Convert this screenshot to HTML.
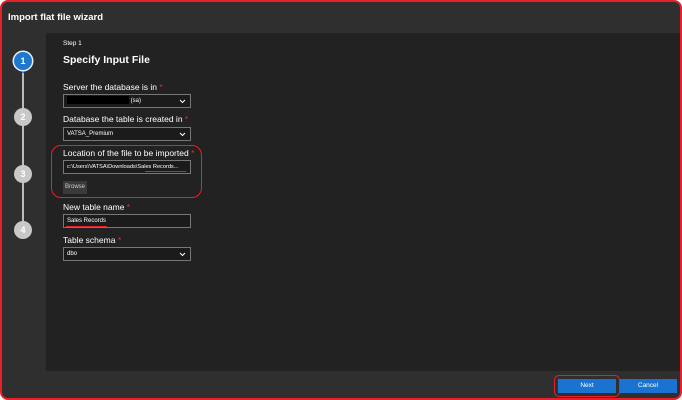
<!DOCTYPE html><html><head><style>
body{margin:0;width:682px;height:400px;overflow:hidden;background:#fff;font-family:"Liberation Sans",sans-serif;}
.o{position:absolute;left:0;top:0;width:678px;height:396px;border:2px solid #e8202a;border-radius:8px;background:#2f2f2f;overflow:hidden}
.t{position:absolute;left:6px;top:10px;color:#fff;font-size:9.5px;font-weight:bold}
.p{position:absolute;left:44px;top:31px;right:0;height:338px;background:#222}
.line{position:absolute;left:20px;width:2px;background:#bbb}
.c{position:absolute;left:12px;width:18px;height:18px;border-radius:50%;background:#c8c8c8;color:#fff;font-size:9px;font-weight:bold;text-align:center;line-height:18px}
.a{position:absolute;color:#fff;white-space:nowrap}
.lb{font-size:8.5px}
.lb b{color:#e03030;font-weight:normal}
.dd{position:absolute;left:61px;width:128px;height:14px;border:1px solid #777;background:#1b1b1b;color:#fff;font-size:6px;line-height:12px;padding-left:3px;box-sizing:border-box;white-space:nowrap;overflow:hidden}
.dd svg{position:absolute;right:4px;top:4px}
.btn{position:absolute;top:377px;width:58px;height:14px;background:#1a73d0;color:#fff;font-size:6.5px;text-align:center;line-height:14px}
</style></head><body><div class="o">
<div class="t">Import flat file wizard</div>
<div class="p"></div>
<div class="line" style="top:66px;height:5px;background:#1e78d0"></div>
<div class="line" style="top:71px;height:160px"></div>
<div class="c" style="top:50px;background:#1e78d0;box-shadow:0 0 0 1.5px #e8f0fa">1</div>
<div class="c" style="top:106px">2</div>
<div class="c" style="top:163px">3</div>
<div class="c" style="top:219px">4</div>
<div class="a" style="left:61px;top:38px;font-size:6.5px">Step 1</div>
<div class="a" style="left:61px;top:52px;font-size:10.5px;font-weight:bold">Specify Input File</div>
<div class="a lb" style="left:61px;top:80px">Server the database is in <b>*</b></div>
<div class="dd" style="top:92px"><span style="display:inline-block;width:62px;height:8px;background:#000;vertical-align:middle"></span> (sa)<svg width="7" height="5"><path d="M1 1l2.5 2.5L6 1" stroke="#fff" fill="none"/></svg></div>
<div class="a lb" style="left:61px;top:112px">Database the table is created in <b>*</b></div>
<div class="dd" style="top:125px">VATSA_Premium<svg width="7" height="5"><path d="M1 1l2.5 2.5L6 1" stroke="#fff" fill="none"/></svg></div>
<div style="position:absolute;left:49px;top:143px;width:149px;height:51px;border:1.5px solid #e8202a;border-radius:10px"></div>
<div class="a lb" style="left:61px;top:146px">Location of the file to be imported <b>*</b></div>
<div class="dd" style="top:158px;font-size:5.6px">c:\Users\VATSA\Downloads\Sales Records...</div>
<div style="position:absolute;left:143px;top:169px;width:41px;height:1px;background:#e8202a"></div>
<div style="position:absolute;left:61px;top:179px;width:24px;height:13px;background:#3a3a3a;color:#ccc;font-size:6px;line-height:13px;text-align:center">Browse</div>
<div class="a lb" style="left:61px;top:200px">New table name <b>*</b></div>
<div class="dd" style="top:212px">Sales Records</div>
<div style="position:absolute;left:64px;top:224px;width:41px;height:1px;background:#e8202a"></div>
<div class="a lb" style="left:61px;top:233px">Table schema <b>*</b></div>
<div class="dd" style="top:245px">dbo<svg width="7" height="5"><path d="M1 1l2.5 2.5L6 1" stroke="#fff" fill="none"/></svg></div>
<div class="btn" style="left:556px">Next</div>
<div class="btn" style="left:617px">Cancel</div>
<div style="position:absolute;left:552px;top:373px;width:64px;height:20px;border:1.5px solid #e8202a;border-radius:5px"></div>
</div></body></html>
